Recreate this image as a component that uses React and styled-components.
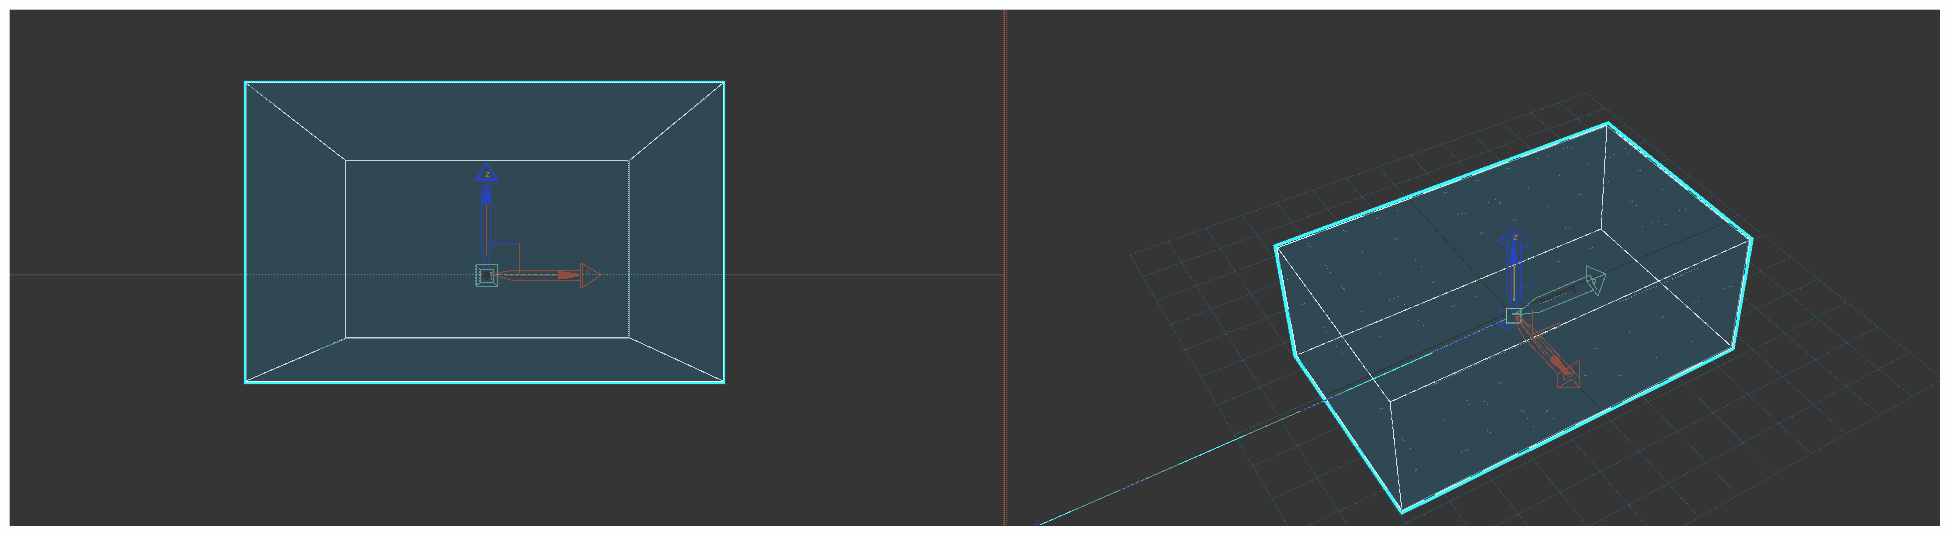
import React from "react";
import styled, { createGlobalStyle } from "styled-components";

const C = {
  bg: "#353535",
  fill: "#2f4854",
  cyan: "#3cf6fb",
  pale: "#c3d2d5",
  sage: "#629492",
  blue: "#2a42bb",
  red: "#914d40",
  label: "#b98678",
  dark: "#353535",
};

const GlobalStyle = createGlobalStyle`
  body { margin: 0; background: #fdfdfd; font-family: "Liberation Sans", sans-serif; }
`;

const Page = styled.main`
  padding: 9px 10px 10px 9px;
`;

const Workspace = styled.div`
  display: grid;
  grid-template-columns: minmax(0, 993fr) 5px minmax(0, 932fr);
  background: ${C.bg};
  border-top: 1px solid #b9c6c9;
  border-left: 1px solid #b9c6c9;
`;

const Viewport = styled.section`
  min-width: 0;
`;

const Scene = styled.svg`
  display: block;
  width: 100%;
  height: auto;
  fill: none;
  shape-rendering: crispEdges;
`;

const Divider = styled.div`
  display: grid;
  grid-template-columns: 1px 1px 1px 1px 1px;
`;

const Strand = styled.span`
  grid-column: ${(p) => p.$col};
  grid-row: 1;
  background: repeating-linear-gradient(
    to bottom,
    ${(p) => p.$color} 0 1px,
    ${(p) => (p.$solid ? p.$color : "transparent")} 1px 2px
  );
`;

const Edge = styled.path`
  stroke: ${(p) => p.$color || C.pale};
  stroke-width: ${(p) => p.$w || 1};
  stroke-dasharray: ${(p) => p.$dash || "none"};
`;

const Solid = styled.path`
  fill: ${(p) => p.$color};
`;

const AxisLabel = styled.text`
  font-family: "Liberation Sans", sans-serif;
  font-size: 8px;
  fill: ${(p) => p.$color};
`;

/* One-pixel marks drawn as a single path. */
const marks = (points) => points.map(([x, y]) => `M${x} ${y}h1v1h-1z`).join("");
const run = (from, to, step, y) => {
  const out = [];
  for (let x = from; x <= to; x += step) out.push([x, y]);
  return out;
};

/* ---------- ground plane of the perspective view ---------- */
const CELLS = 14;
const project = (u, v) => {
  const s = u / CELLS;
  const t = v / CELLS;
  const w = 1 + 0.198 * s - 0.307 * t;
  return [
    Math.round((1129.5 + 770.9 * s - 169.1 * t) / w),
    Math.round((255 - 143.6 * s + 226.3 * t) / w),
  ];
};
const steps = Array.from({ length: CELLS + 1 }, (_, i) => i);
const segment = (a, b) => `M${a.join(" ")}L${b.join(" ")}`;
const gridLines = steps
  .map((i) => segment(project(i, 0), project(i, CELLS)) + segment(project(0, i), project(CELLS, i)))
  .join("");
const gridSparks = marks(
  steps.flatMap((u) =>
    steps.flatMap((v) => {
      const out = [];
      if ((u * 5 + v * 3) % 4 < 2) out.push(project(u, v));
      if ((u + v * 2) % 3 === 0) out.push(project(u + 0.4, v), project(u, v + 0.6));
      return out.filter(() => u < CELLS && v < CELLS);
    })
  )
);

const boxSparks = marks([
  [1343, 230], [1345, 231], [1308, 243], [1310, 246], [1376, 218], [1378, 217], [1397, 210],
  [1395, 238], [1397, 239], [1362, 251], [1325, 265], [1327, 268], [1330, 272], [1341, 286],
  [1343, 288], [1344, 289], [1379, 273], [1415, 259], [1287, 279], [1302, 304], [1304, 303],
  [1389, 300], [1394, 298], [1398, 296], [1361, 311], [1404, 304], [1323, 327], [1326, 332],
  [1379, 336], [1418, 320], [1423, 325], [1336, 346], [1342, 353], [1476, 180], [1478, 180],
  [1444, 192], [1446, 192], [1457, 214], [1461, 213], [1465, 213], [1488, 202], [1495, 199],
  [1499, 202], [1507, 168], [1509, 168], [1480, 233], [1482, 232], [1513, 220], [1421, 266],
  [1432, 282], [1434, 281], [1476, 296], [1452, 306], [1454, 305], [1537, 158], [1547, 155],
  [1563, 148], [1567, 147], [1571, 148], [1588, 163], [1559, 175], [1528, 187], [1578, 194],
  [1580, 194], [1548, 206], [1500, 203], [1515, 219], [1565, 228], [1569, 227],
  [1610, 157], [1614, 154], [1625, 148], [1628, 153], [1638, 170], [1640, 170], [1608, 181],
  [1662, 189], [1630, 201], [1632, 201], [1636, 205], [1679, 210], [1685, 209], [1642, 226],
  [1652, 222], [1658, 221], [1665, 224], [1590, 248], [1592, 247], [1557, 261], [1559, 261],
  [1724, 288], [1729, 286], [1731, 286], [1694, 302], [1698, 301], [1661, 317], [1663, 316],
  [1629, 331], [1691, 341], [1595, 348], [1597, 348], [1656, 357], [1619, 375], [1621, 375],
  [1380, 408], [1382, 408], [1402, 438], [1404, 440], [1410, 448], [1443, 420], [1467, 400],
  [1469, 404], [1484, 401], [1487, 404], [1498, 383], [1500, 382], [1521, 410], [1523, 411],
  [1527, 418], [1533, 426], [1461, 452], [1465, 450], [1467, 449], [1415, 470], [1416, 469],
  [1487, 430], [1490, 432], [1546, 411], [1547, 410], [1553, 418], [1584, 375], [1586, 375],
]);

function FrontBox() {
  return (
    <>
      <Edge d="M10 274.5H1003" $color={C.red} $dash="1 1" />
      <Edge d="M10 275.5H1003" $color={C.fill} $dash="2 1" />
      <Solid d="M243 80H726V385H243z" $color={C.fill} />
      <Solid d="M244 81H725V384H244zM247 83V382H723V83z" $color={C.cyan} fillRule="evenodd" />
      <Edge d="M246.5 83V382" $color={C.sage} />
      <Edge d="M246 381.5H723" $color="#ffffff" />
      <Edge d="M246 82.5H723M723.5 82V382" $color="#ffffff" $dash="1 1" />
      <Edge d="M246 83L345 160M723 83L630 160M346 338L246 381M630 338L723 381" />
      <Edge d="M250 86L276 106M690 111L708 96M320 349L345 339" $color={C.sage} />
      <Edge d="M629.5 160V338M345 338.5H630" $color={C.sage} />
      <Edge d="M345.5 338V160.5H628M346 337.5H629" />
      <Edge d="M628.5 161V337" $dash="1 1" />
      <Edge d="M346 339.5H628" $color="#4c3c3c" $dash="1 2" />
      <Edge d="M247 274.5H723" $color={C.sage} $dash="1 2" />
      <Solid
        d={marks([
          ...run(315, 655, 10, 126), ...run(371, 448, 11, 208), ...run(520, 599, 11, 208),
          ...run(379, 446, 11, 242), ...run(369, 460, 10, 324), [461, 216], [458, 248],
          [367, 239], [473, 330], [485, 332], [495, 332], [509, 231], [610, 209], [604, 326],
        ])}
        $color={C.dark}
      />
    </>
  );
}

function FrontGizmo() {
  return (
    <>
      <Edge d="M486.5 163L476 180H497Z" $color={C.blue} $w="2" />
      <Solid d="M475 178H498V181H475zM486 181L483 196L481 198V204H491V198L488 190z" $color={C.blue} />
      <Edge d="M481.5 181V250L484 260V267M490.5 181V250L488 260V267M488 243.5H519" $color={C.blue} />
      <Edge d="M486.5 204V257M519.5 243V274" $color={C.red} />
      <Edge d="M518.5 246V274" $color={C.dark} $dash="1 2" />
      <AxisLabel x="485" y="177" $color={C.label}>Z</AxisLabel>

      <Edge d="M476.5 264.5H497.5V286.5H476.5zM480.5 269.5H493.5V282.5H480.5zM476 286L481 282M497 286L493 282" $color={C.sage} />
      <Edge d="M475.5 265V286M479.5 268V283M484 272.5H491V280" $color={C.sage} $dash="2 1" />
      <Solid d="M484 272H487V271H489V274H490V278H488V280H485V277H483V274H484z" $color={C.dark} />

      <Edge d="M492 275L503 272L514 270.5H580M492 275L504 278L513 280.5H580M505 275.5H558" $color={C.red} />
      <Edge d="M506 276.5H558" $color={C.dark} />
      <Edge d="M498 274.5H556" $color={C.sage} $dash="1 1" />
      <Solid d="M558 271L567 272L580 274V276L568 279H558z" $color={C.red} />
      <Edge d="M562 279L568 279L578 277" $color={C.dark} />
      <Edge d="M580.5 263.5H582.5V287.5H580.5zM583 264L601 275L583 287" $color={C.red} />
      <AxisLabel x="585" y="274" $color={C.red}>x</AxisLabel>
    </>
  );
}

function PerspectiveBox() {
  return (
    <>
      <Edge d={gridLines} $color="#2e4a56" $dash="7 1" />
      <Solid d={gridSparks} $color="#8b4a3b" />
      <Edge d="M1275 246L1608 123L1752 239L1733 349L1402 513L1295 356Z" $color="#3a6a74" $w="4" />
      <Solid d="M1275 246L1608 123L1752 239L1733 349L1402 513L1295 356Z" $color={C.fill} />
      <Edge d="M1277 248L1607 126L1749 240L1731 347L1402 510L1297 356Z" $color={C.sage} />
      <Edge d="M1275 246L1608 123L1752 239L1733 349L1402 513L1295 356Z" $color={C.cyan} $w="3" />
      <Edge d="M1277 248L1607 125L1750 240L1732 348L1402 511L1297 356Z" $color="#d9f0f0" $dash="40 12" />
      <Solid d={boxSparks} $color={C.sage} />
      <Edge d="M1408 198L1508 310M1580 388L1602 411M1326 395L1506 314M1520 308L1727 222" $color={C.dark} />
      <Edge d="M1332 393L1500 317" $color={C.dark} />
      <Edge d="M1277 247L1390 402L1402 511M1390 402L1750 240M1607 125L1601 229L1297 355M1601 229L1732 347" $color={C.sage} />
      <Edge d="M1277 247L1390 402L1402 511M1390 402L1750 240M1607 125L1601 229L1297 355M1601 229L1732 347" $color="#cfdedd" $dash="18 4 6 3" />
      <Edge d="M1430 386L1560 327M1620 302L1700 267" $color={C.sage} $dash="1 2" />
      <Edge d="M1040 525L1326 400L1420 358L1506 319" $color={C.sage} />
      <Edge d="M1040 525L1074 510M1180 464L1246 435M1346 391L1432 353" $color={C.cyan} $dash="4 1" />
      <Edge d="M1120 490L1146 479M1301 411L1338 395M1434 352L1500 322" $color={C.blue} $dash="3 2" />
      <AxisLabel x="1035" y="525" $color={C.blue}>Z</AxisLabel>
    </>
  );
}

function PerspectiveGizmo() {
  return (
    <>
      <Edge d="M1516 313L1525 307L1536 298L1590 275M1516 315L1540 312L1594 290" $color={C.sage} />
      <Edge d="M1586.5 266V281L1598 296L1606 274ZM1587 281L1606 274M1590 275L1594 285L1596 280L1591 278L1597 290" $color={C.sage} />
      <Edge d="M1540 304L1573 290" $color={C.sage} $dash="1 2" />
      <Edge d="M1540 302L1575 287M1573 286L1575 293" $color={C.dark} $w="2" />

      <Edge d="M1499.5 312V325L1507 330L1518 324M1499 312L1507 308M1507.5 321V330M1500 325L1507 321" $color={C.blue} />
      <Edge d="M1497 241L1513 227L1531 245L1515 251ZM1497 241L1518 234M1513 227V240" $color={C.blue} />
      <Edge d="M1507.5 241V293L1512 311M1521.5 243V297L1515 311M1507 241L1512 239L1521 243M1511.5 263V304M1516.5 263V304M1518 290L1541 280M1518 295L1532 309" $color={C.blue} />
      <Edge d="M1520.5 243V297" $color={C.blue} $dash="1 1" />
      <Solid d="M1512 241H1515L1516 252L1519 263L1514 265L1509 263L1511 252z" $color={C.blue} />
      <Edge d="M1514 264V301" $color={C.sage} $w="2" />
      <Edge d="M1513.5 267V298" $color={C.red} />
      <AxisLabel x="1513" y="240" $color={C.label}>Z</AxisLabel>

      <Edge d="M1506.5 308.5H1521.5V323.5H1506.5z" $color="#8eb3b1" />
      <Edge d="M1507 322.5H1521M1520.5 309V323M1512 314H1520" $color={C.sage} $w="2" />

      <Edge d="M1519 316L1534 329L1579 377M1515 321L1524 338L1558 374M1518 320L1550 357M1520 318L1555 356M1521 325L1545 355" $color={C.red} />
      <Edge d="M1532.5 309V334M1530 335L1560 323" $color={C.red} />
      <Solid d="M1515 316H1519V322L1516 320zM1550 358L1554 355L1558 357L1567 370L1572 373L1566 376L1558 367L1551 363z" $color={C.red} />
      <Edge d="M1557.5 374V388L1579.5 387.5V360L1558 374M1558 388L1572 379L1579 387M1563 371L1571 367L1574 374L1564 380Z" $color={C.red} />
      <AxisLabel x="1569" y="375" $color={C.red}>x</AxisLabel>
    </>
  );
}

export default function App() {
  return (
    <>
      <GlobalStyle />
      <Page>
        <Workspace>
          <Viewport aria-label="Front view">
            <Scene viewBox="10 10 993 516">
              <FrontBox />
              <FrontGizmo />
            </Scene>
          </Viewport>
          <Divider>
            <Strand $col={1} $color={C.red} />
            <Strand $col={2} $color={C.red} $solid />
            <Strand $col={4} $color={C.red} />
            <Strand $col={5} $color={C.fill} />
          </Divider>
          <Viewport aria-label="Perspective view">
            <Scene viewBox="1008 10 932 516">
              <PerspectiveBox />
              <PerspectiveGizmo />
            </Scene>
          </Viewport>
        </Workspace>
      </Page>
    </>
  );
}
